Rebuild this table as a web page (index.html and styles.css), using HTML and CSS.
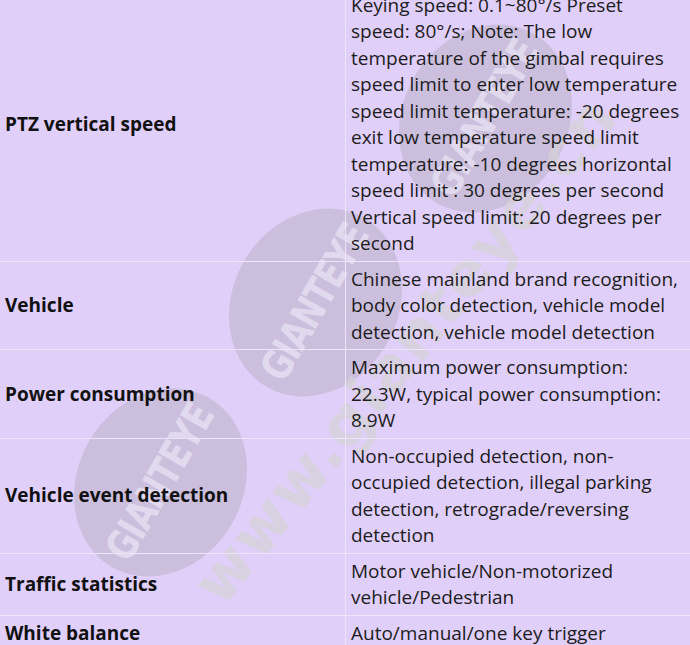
FILE: index.html
```html
<!DOCTYPE html>
<html lang="en">
<head>
<meta charset="utf-8">
<title>Specifications</title>
<link rel="stylesheet" href="styles.css">
</head>
<body>
<div class="page">
  <div class="watermark" aria-hidden="true">
    <div class="logo logo-a"><span>GIANTEYE</span></div>
    <div class="logo logo-b"><span>GIANTEYE</span></div>
    <div class="logo logo-c"><span>GIANTEYE</span></div>
    <div class="site">www.gianteye.cn</div>
  </div>
  <div class="specs">
    <div class="row">
      <div class="key">PTZ vertical speed</div>
      <div class="val">Keying speed: 0.1~80°/s Preset<br>speed: 80°/s; Note: The low<br>temperature of the gimbal requires<br>speed limit to enter low temperature<br>speed limit temperature: -20 degrees<br>exit low temperature speed limit<br>temperature: -10 degrees horizontal<br>speed limit : 30 degrees per second<br>Vertical speed limit: 20 degrees per<br>second</div>
    </div>
    <div class="row">
      <div class="key">Vehicle</div>
      <div class="val">Chinese mainland brand recognition,<br>body color detection, vehicle model<br>detection, vehicle model detection</div>
    </div>
    <div class="row">
      <div class="key">Power consumption</div>
      <div class="val">Maximum power consumption:<br>22.3W, typical power consumption:<br>8.9W</div>
    </div>
    <div class="row">
      <div class="key">Vehicle event detection</div>
      <div class="val">Non-occupied detection, non-<br>occupied detection, illegal parking<br>detection, retrograde/reversing<br>detection</div>
    </div>
    <div class="row">
      <div class="key">Traffic statistics</div>
      <div class="val">Motor vehicle/Non-motorized<br>vehicle/Pedestrian</div>
    </div>
    <div class="row">
      <div class="key">White balance</div>
      <div class="val">Auto/manual/one key trigger</div>
    </div>
  </div>
</div>
</body>
</html>
```
FILE: styles.css
```css
html, body {
  margin: 0;
  padding: 0;
  background: #e0cff9;
}
body {
  font-family: "Open Sans", "Noto Sans", sans-serif;
  font-size: 19px;
  line-height: 26.5px;
  color: #1c1c1c;
  overflow: hidden;
}
.page {
  position: relative;
  width: 690px;
  height: 645px;
  overflow: hidden;
}
.specs {
  position: relative;
  z-index: 1;
  margin-top: -12.5px;
}
.row {
  display: grid;
  grid-template-columns: 345px 1fr;
  border-bottom: 1px solid #eee5fb;
}
.key {
  display: flex;
  align-items: center;
  padding: 4px 5px;
  font-weight: 700;
  color: #111;
}
.val {
  padding: 4px 5px;
  border-left: 1px solid #eee5fb;
  white-space: nowrap;
  overflow: hidden;
}
.watermark {
  position: absolute;
  inset: 0;
  z-index: 0;
  pointer-events: none;
}
.logo {
  position: absolute;
  width: 195px;
  height: 165px;
  margin: -82px 0 0 -97px;
  border-radius: 50%;
  background: rgba(150, 150, 150, 0.28);
  transform: rotate(-60deg);
  display: flex;
  align-items: center;
  justify-content: center;
}
.logo span {
  font-family: "DejaVu Sans Condensed", "DejaVu Sans", sans-serif;
  font-stretch: condensed;
  font-weight: 700;
  font-size: 36px;
  letter-spacing: -1px;
  transform: scaleY(1.15);
  color: rgba(236, 230, 246, 0.7);
}
.logo-a { left: 160px; top: 482px; }
.logo-b { left: 315px; top: 302px; }
.logo-c { left: 485px; top: 118px; }
.site {
  position: absolute;
  left: 405px;
  top: 350px;
  width: 700px;
  margin-left: -350px;
  margin-top: -40px;
  text-align: center;
  font-family: "DejaVu Sans", sans-serif;
  font-weight: 700;
  font-size: 62px;
  line-height: 80px;
  letter-spacing: 2px;
  color: rgba(212, 210, 214, 0.7);
  transform: rotate(-51deg);
}
```
